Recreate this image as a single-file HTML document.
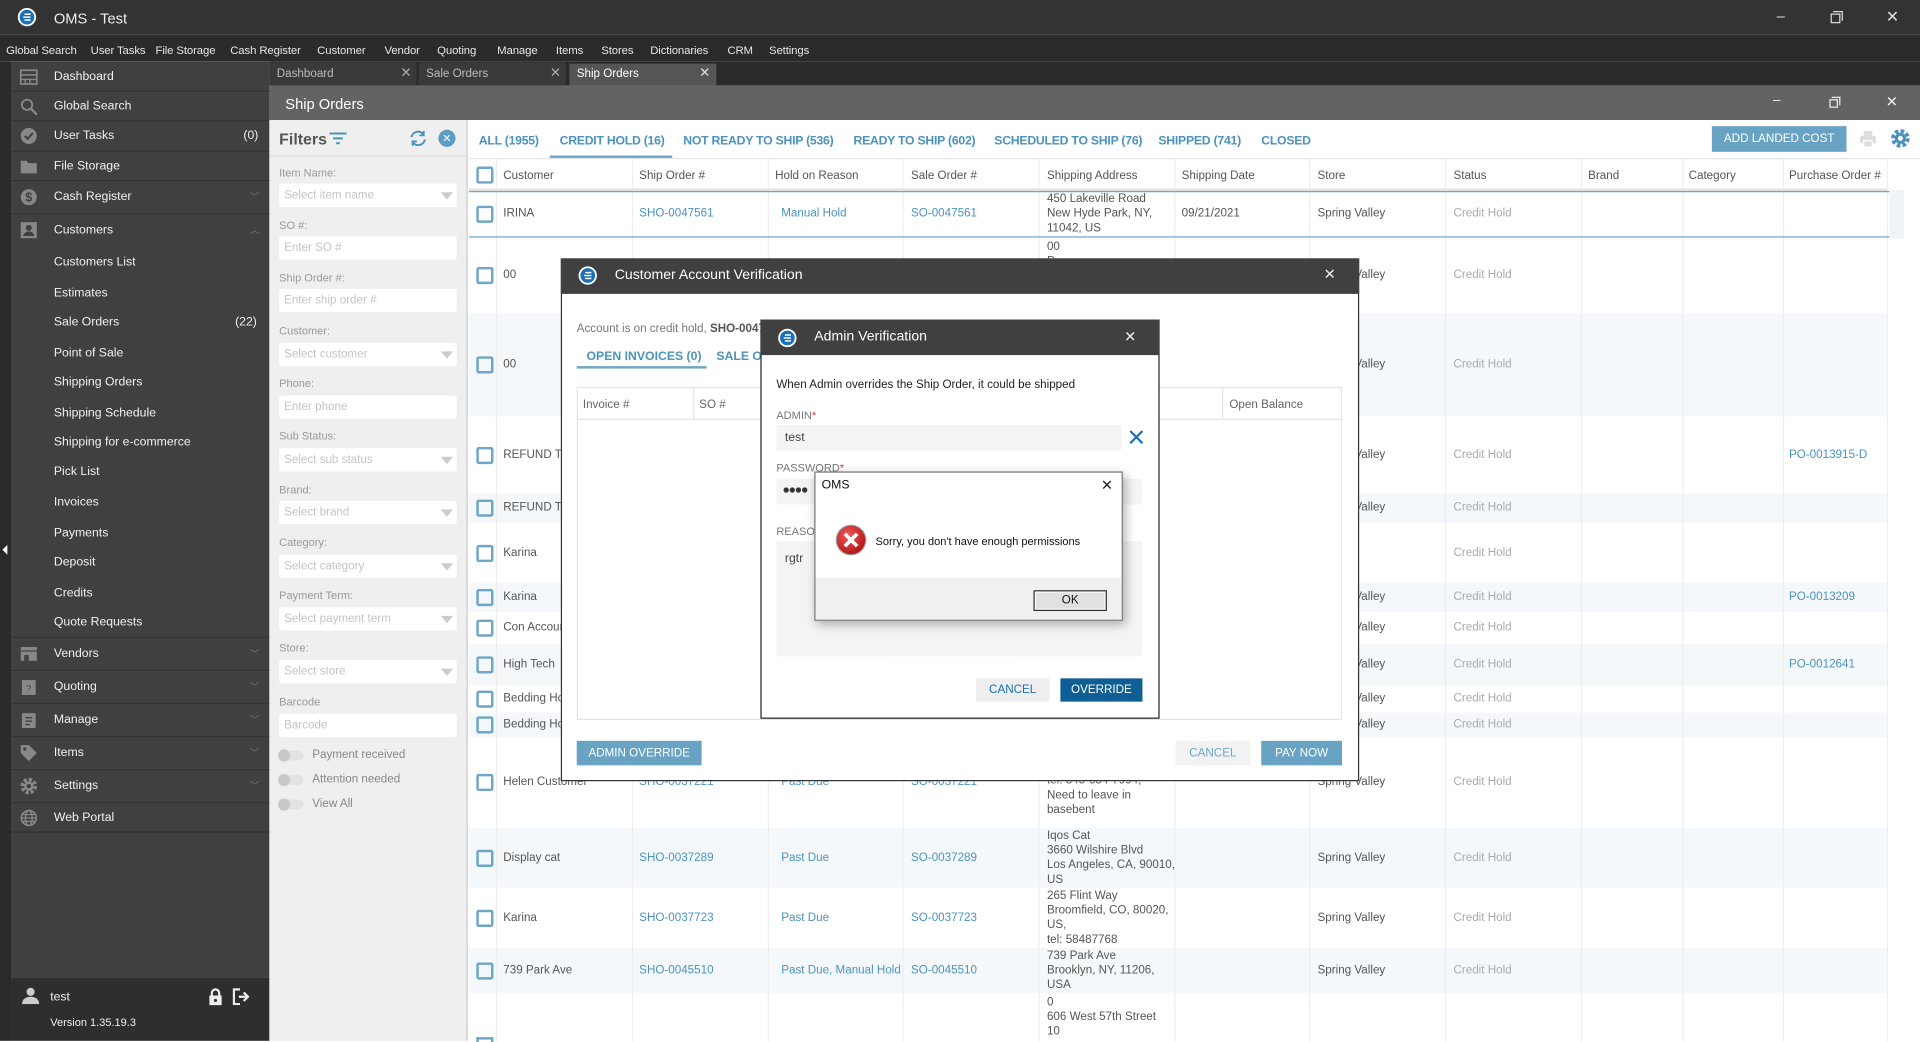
<!DOCTYPE html>
<html><head><meta charset="utf-8">
<style>
*{box-sizing:border-box;margin:0;padding:0}
html,body{width:1920px;height:1040px;overflow:hidden;background:#fff}
#s{position:absolute;left:0;top:0;width:1568px;height:850px;transform:scale(1.22449);transform-origin:0 0;font-family:"Liberation Sans",sans-serif;font-size:10px;color:#333}
.a{position:absolute}
.t{position:absolute;white-space:nowrap}
.menu span{position:absolute;top:36px;color:#e6e6e6;font-size:9.3px;letter-spacing:-.1px}
.sb{position:absolute;left:9px;width:211px;border-bottom:1px solid #333;color:#f0f0f0;font-size:10px}
.sb span{position:absolute;left:35px;top:50%;transform:translateY(-50%)}
.sb .ic{position:absolute;left:7px;top:50%;transform:translateY(-50%);width:15px;height:15px}
.sb .cnt{left:auto;right:9px}
.sb .chev{left:auto;right:8px;color:#777;font-size:8px}
.lbl{position:absolute;left:228px;color:#999;font-size:9px}
.inp{position:absolute;left:228px;width:145px;height:19px;background:#fff;border-radius:2px;color:#c4c4c4;font-size:9.5px;padding:4px 4px}
.inp.dd:after{content:"";position:absolute;right:3px;top:7px;border-left:5px solid transparent;border-right:5px solid transparent;border-top:6px solid #ccc}
.tg{position:absolute;left:228px;width:20px;height:8px;border-radius:4px;background:#e2e2e2}
.tg:before{content:"";position:absolute;left:-1px;top:-1px;width:10px;height:10px;border-radius:5px;background:#c8c8c8}
.ft{position:absolute;top:110px;color:#4b93bd;font-size:10px;font-weight:bold;letter-spacing:-.2px}
.hd{position:absolute;top:138px;color:#555;font-size:9.5px}
.row{position:absolute;left:383px;width:1158px}
.row .c{position:absolute;top:0;height:100%;display:flex;align-items:center;white-space:nowrap;font-size:9.5px;color:#555;line-height:12px}
.row .l{color:#4b93bd}
.row .g{color:#aaa}
.cb{position:absolute;left:6px;width:14px;height:14px;border:2px solid #6ca6c8;border-radius:2px;top:50%;margin-top:-7px}
.vl{position:absolute;top:130px;width:1px;height:720px;background:#eee}
.btn{position:absolute;display:flex;align-items:center;justify-content:center;font-size:9.5px}
</style></head><body><div id="s">

<div class="a" style="left:0;top:0;width:1568px;height:28px;background:#333"></div>
<svg class="a" style="left:14px;top:6px" width="16" height="16" viewBox="0 0 16 16"><circle cx="8" cy="8" r="7.5" fill="#fff"/><circle cx="8" cy="8" r="6" fill="#1b6fb5"/><rect x="6" y="5" width="5" height="1.2" fill="#fff"/><rect x="5" y="7.4" width="6" height="1.2" fill="#fff"/><rect x="6" y="9.8" width="5" height="1.2" fill="#fff"/></svg>
<div class="t" style="left:44px;top:8px;color:#eee;font-size:12px">OMS - Test</div>
<div class="t" style="left:1451px;top:6px;color:#ddd;font-size:12px">–</div>
<div class="a" style="left:1497px;top:9px;width:8px;height:8px;border:1px solid #ddd;border-left:none;border-bottom:none"></div>
<div class="a" style="left:1495px;top:11px;width:8px;height:8px;border:1px solid #ddd"></div>
<div class="t" style="left:1540px;top:6px;color:#ddd;font-size:13px">✕</div>

<div class="a" style="left:0;top:28px;width:1568px;height:22px;background:#2b2b2b;border-top:1px solid #3a3a3a"></div>
<div class="menu">
<span style="left:5px">Global Search</span><span style="left:74px">User Tasks</span><span style="left:127px">File Storage</span><span style="left:188px">Cash Register</span><span style="left:259px">Customer</span><span style="left:314px">Vendor</span><span style="left:357px">Quoting</span><span style="left:406px">Manage</span><span style="left:454px">Items</span><span style="left:491px">Stores</span><span style="left:531px">Dictionaries</span><span style="left:594px">CRM</span><span style="left:628px">Settings</span>
</div>

<div class="a" style="left:0;top:50px;width:9px;height:800px;background:#2a2a2a"></div>
<div class="a" style="left:2px;top:445px;border-top:4px solid transparent;border-bottom:4px solid transparent;border-right:4px solid #fff"></div>
<div class="a" style="left:9px;top:50px;width:211px;height:748px;background:#404040"></div>
<div class="sb" style="top:51px;height:24px"><svg class="ic" viewBox="0 0 16 16"><rect x="1" y="2" width="14" height="12" fill="none" stroke="#888" stroke-width="1.5"/><path d="M1 6h14M5 10v4M9 10v4M1 10h14" stroke="#888" stroke-width="1.3"/></svg><span>Dashboard</span></div>
<div class="sb" style="top:75px;height:24px"><svg class="ic" viewBox="0 0 16 16"><circle cx="6.5" cy="6.5" r="4.5" fill="none" stroke="#888" stroke-width="1.6"/><path d="M10 10l5 5" stroke="#888" stroke-width="2"/></svg><span>Global Search</span></div>
<div class="sb" style="top:99px;height:25px"><svg class="ic" viewBox="0 0 16 16"><circle cx="8" cy="8" r="7" fill="#888"/><path d="M4.5 8l2.5 2.5 4.5-5" stroke="#404040" stroke-width="1.8" fill="none"/></svg><span>User Tasks</span><span class="cnt">(0)</span></div>
<div class="sb" style="top:124px;height:24px"><svg class="ic" viewBox="0 0 16 16"><path d="M1 3h5l1.5 2H15v9H1z" fill="#888"/></svg><span>File Storage</span></div>
<div class="sb" style="top:148px;height:27px"><svg class="ic" viewBox="0 0 16 16"><circle cx="8" cy="8" r="7" fill="#888"/><text x="8" y="12" font-size="11" text-anchor="middle" fill="#404040" font-family="Liberation Sans" font-weight="bold">$</text></svg><span>Cash Register</span><span class="chev">﹀</span></div>
<div class="sb" style="top:175px;height:26px;border-bottom:none"><svg class="ic" viewBox="0 0 16 16"><rect x="1" y="1" width="14" height="14" fill="#888"/><circle cx="8" cy="6" r="2.6" fill="#404040"/><path d="M3 13c1-3 3-4 5-4s4 1 5 4z" fill="#404040"/></svg><span>Customers</span><span class="chev">︿</span></div>
<div class="t" style="left:44px;top:209px;color:#f0f0f0">Customers List</div>
<div class="t" style="left:44px;top:234px;color:#f0f0f0">Estimates</div>
<div class="t" style="left:44px;top:258px;color:#f0f0f0">Sale Orders</div><div class="t" style="left:192px;top:258px;color:#f0f0f0">(22)</div>
<div class="t" style="left:44px;top:283px;color:#f0f0f0">Point of Sale</div>
<div class="t" style="left:44px;top:307px;color:#f0f0f0">Shipping Orders</div>
<div class="t" style="left:44px;top:332px;color:#f0f0f0">Shipping Schedule</div>
<div class="t" style="left:44px;top:356px;color:#f0f0f0">Shipping for e-commerce</div>
<div class="t" style="left:44px;top:380px;color:#f0f0f0">Pick List</div>
<div class="t" style="left:44px;top:405px;color:#f0f0f0">Invoices</div>
<div class="t" style="left:44px;top:430px;color:#f0f0f0">Payments</div>
<div class="t" style="left:44px;top:454px;color:#f0f0f0">Deposit</div>
<div class="t" style="left:44px;top:479px;color:#f0f0f0">Credits</div>
<div class="t" style="left:44px;top:503px;color:#f0f0f0">Quote Requests</div>
<div class="a" style="left:9px;top:520px;width:211px;height:1px;background:#333"></div>
<div class="sb" style="top:521px;height:27px"><svg class="ic" viewBox="0 0 16 16"><rect x="1" y="2" width="14" height="3" fill="#888"/><rect x="1" y="6" width="14" height="8" fill="#888"/><rect x="4" y="9" width="4" height="5" fill="#404040"/></svg><span>Vendors</span><span class="chev">﹀</span></div>
<div class="sb" style="top:548px;height:27px"><svg class="ic" viewBox="0 0 16 16"><rect x="2" y="2" width="12" height="13" fill="#888"/><text x="8" y="12" font-size="8" text-anchor="middle" fill="#404040" font-family="Liberation Sans">?</text></svg><span>Quoting</span><span class="chev">﹀</span></div>
<div class="sb" style="top:575px;height:27px"><svg class="ic" viewBox="0 0 16 16"><rect x="2" y="2" width="12" height="13" rx="1" fill="#888"/><path d="M5 6h6M5 9h6M5 12h4" stroke="#404040" stroke-width="1.2"/></svg><span>Manage</span><span class="chev">﹀</span></div>
<div class="sb" style="top:602px;height:27px"><svg class="ic" viewBox="0 0 16 16"><path d="M1 1h7l7 7-7 7-7-7z" fill="#888"/><circle cx="4.5" cy="4.5" r="1.4" fill="#404040"/></svg><span>Items</span><span class="chev">﹀</span></div>
<div class="sb" style="top:629px;height:27px"><svg class="ic" viewBox="0 0 16 16"><circle cx="8" cy="8" r="5.5" fill="none" stroke="#888" stroke-width="3.5" stroke-dasharray="2.6 1.7"/><circle cx="8" cy="8" r="4" fill="#888"/><circle cx="8" cy="8" r="1.8" fill="#404040"/></svg><span>Settings</span><span class="chev">﹀</span></div>
<div class="sb" style="top:656px;height:24px"><svg class="ic" viewBox="0 0 16 16"><circle cx="8" cy="8" r="6.5" fill="none" stroke="#888" stroke-width="1.4"/><ellipse cx="8" cy="8" rx="3" ry="6.5" fill="none" stroke="#888" stroke-width="1.2"/><path d="M1.5 8h13M2.5 5h11M2.5 11h11" stroke="#888" stroke-width="1.1"/></svg><span>Web Portal</span></div>
<div class="a" style="left:9px;top:798px;width:211px;height:52px;background:#2e2e2e"></div>
<svg class="a" style="left:18px;top:806px" width="14" height="14" viewBox="0 0 14 14"><circle cx="7" cy="4" r="3.3" fill="#ccc"/><path d="M0 14c0-4 3-6 7-6s7 2 7 6z" fill="#ccc"/></svg>
<div class="t" style="left:41px;top:809px;color:#eee">test</div>
<svg class="a" style="left:170px;top:807px" width="12" height="14" viewBox="0 0 12 14"><rect x="1" y="6" width="10" height="8" fill="#eee"/><path d="M3 6V4a3 3 0 0 1 6 0v2" stroke="#eee" stroke-width="1.8" fill="none"/><circle cx="6" cy="10" r="1.3" fill="#2e2e2e"/></svg>
<svg class="a" style="left:190px;top:807px" width="15" height="14" viewBox="0 0 15 14"><path d="M6 1H1v12h5" stroke="#eee" stroke-width="1.8" fill="none"/><path d="M5 7h7M9 3.5L12.5 7 9 10.5" stroke="#eee" stroke-width="1.8" fill="none"/></svg>
<div class="t" style="left:41px;top:830px;color:#eee;font-size:9px">Version 1.35.19.3</div>

<div class="a" style="left:220px;top:50px;width:1348px;height:20px;background:#2b2b2b"></div>
<div class="a" style="left:220px;top:51px;width:120px;height:19px;background:#3a3a3a"></div>
<div class="t" style="left:226px;top:55px;color:#bbb;font-size:9.5px">Dashboard</div><div class="t" style="left:327px;top:53px;color:#aaa;font-size:11px">✕</div>
<div class="a" style="left:342px;top:51px;width:120px;height:19px;background:#3a3a3a"></div>
<div class="t" style="left:348px;top:55px;color:#bbb;font-size:9.5px">Sale Orders</div><div class="t" style="left:449px;top:53px;color:#aaa;font-size:11px">✕</div>
<div class="a" style="left:465px;top:52px;width:120px;height:18px;background:#555"></div>
<div class="t" style="left:471px;top:55px;color:#fff;font-size:9.5px">Ship Orders</div><div class="t" style="left:571px;top:53px;color:#ddd;font-size:11px">✕</div>

<div class="a" style="left:220px;top:70px;width:1348px;height:28px;background:#636363"></div>
<div class="t" style="left:233px;top:78px;color:#fff;font-size:12px">Ship Orders</div>
<div class="t" style="left:1448px;top:76px;color:#eee;font-size:11px">–</div>
<div class="a" style="left:1496px;top:79px;width:7px;height:7px;border:1px solid #eee;border-left:none;border-bottom:none"></div>
<div class="a" style="left:1494px;top:81px;width:7px;height:7px;border:1px solid #eee"></div>
<div class="t" style="left:1540px;top:76px;color:#eee;font-size:12px">✕</div>

<div class="a" style="left:220px;top:98px;width:162px;height:752px;background:#efefef;border-right:1px solid #ccc"></div>
<div class="t" style="left:228px;top:106px;color:#555;font-size:13px;font-weight:bold">Filters</div>
<svg class="a" style="left:269px;top:107px" width="14" height="12" viewBox="0 0 14 12"><path d="M0 2h14M3 6h8M5.5 10h3" stroke="#4b93bd" stroke-width="1.6"/></svg>
<svg class="a" style="left:334px;top:106px" width="15" height="14" viewBox="0 0 15 14"><path d="M2 6a5.5 5.5 0 0 1 10-2M13 8a5.5 5.5 0 0 1-10 2" stroke="#4b93bd" stroke-width="1.6" fill="none"/><path d="M12 1v3.5H8.5M3 13V9.5h3.5" stroke="#4b93bd" stroke-width="1.6" fill="none"/></svg>
<div class="a" style="left:358px;top:106px;width:14px;height:14px;border-radius:7px;background:#5a9ec6;color:#fff;font-size:9px;text-align:center;line-height:14px">✕</div>
<div class="a" style="left:220px;top:127px;width:162px;height:1px;background:#ddd"></div>
<div class="lbl" style="top:136px">Item Name:</div><div class="inp dd" style="top:150px">Select item name</div>
<div class="lbl" style="top:179px">SO #:</div><div class="inp" style="top:193px">Enter SO #</div>
<div class="lbl" style="top:222px">Ship Order #:</div><div class="inp" style="top:236px">Enter ship order #</div>
<div class="lbl" style="top:265px">Customer:</div><div class="inp dd" style="top:280px">Select customer</div>
<div class="lbl" style="top:308px">Phone:</div><div class="inp" style="top:323px">Enter phone</div>
<div class="lbl" style="top:351px">Sub Status:</div><div class="inp dd" style="top:366px">Select sub status</div>
<div class="lbl" style="top:395px">Brand:</div><div class="inp dd" style="top:409px">Select brand</div>
<div class="lbl" style="top:438px">Category:</div><div class="inp dd" style="top:453px">Select category</div>
<div class="lbl" style="top:481px">Payment Term:</div><div class="inp dd" style="top:496px">Select payment term</div>
<div class="lbl" style="top:524px">Store:</div><div class="inp dd" style="top:539px">Select store</div>
<div class="lbl" style="top:568px">Barcode</div><div class="inp" style="top:583px">Barcode</div>
<div class="tg" style="top:613px"></div><div class="t" style="left:255px;top:611px;color:#888;font-size:9.5px">Payment received</div>
<div class="tg" style="top:633px"></div><div class="t" style="left:255px;top:631px;color:#888;font-size:9.5px">Attention needed</div>
<div class="tg" style="top:653px"></div><div class="t" style="left:255px;top:651px;color:#888;font-size:9.5px">View All</div>

<div class="ft" style="left:391px">ALL (1955)</div>
<div class="ft" style="left:457px">CREDIT HOLD (16)</div>
<div class="a" style="left:449px;top:127px;width:100px;height:2px;background:#6ca6c8"></div>
<div class="ft" style="left:558px">NOT READY TO SHIP (536)</div>
<div class="ft" style="left:697px">READY TO SHIP (602)</div>
<div class="ft" style="left:812px">SCHEDULED TO SHIP (76)</div>
<div class="ft" style="left:946px">SHIPPED (741)</div>
<div class="ft" style="left:1030px">CLOSED</div>
<div class="btn" style="left:1398px;top:103px;width:110px;height:21px;background:#69a3c4;color:#fff">ADD LANDED COST</div>
<svg class="a" style="left:1518px;top:106px" width="15" height="15" viewBox="0 0 15 15"><rect x="4" y="1" width="7" height="4" fill="#ddd"/><rect x="1" y="5" width="13" height="6" rx="1" fill="#ddd"/><rect x="4" y="9" width="7" height="5" fill="#ddd" stroke="#fff"/></svg>
<svg class="a" style="left:1544px;top:105px" width="16" height="16" viewBox="0 0 16 16"><circle cx="8" cy="8" r="5.8" fill="none" stroke="#4b93bd" stroke-width="3.6" stroke-dasharray="2.8 1.75"/><circle cx="8" cy="8" r="4.5" fill="#4b93bd"/><circle cx="8" cy="8" r="2" fill="#fff"/></svg>
<div class="a" style="left:383px;top:129px;width:1185px;height:1px;background:#e4e4e4"></div>

<div class="a" style="left:383px;top:256px;width:1158px;height:84px;background:#f4f8fb"></div>
<div class="a" style="left:383px;top:403px;width:1158px;height:24px;background:#f4f8fb"></div>
<div class="a" style="left:383px;top:476px;width:1158px;height:24px;background:#f4f8fb"></div>
<div class="a" style="left:383px;top:526px;width:1158px;height:34px;background:#f4f8fb"></div>
<div class="a" style="left:383px;top:582px;width:1158px;height:20px;background:#f4f8fb"></div>
<div class="a" style="left:383px;top:676px;width:1158px;height:49px;background:#f4f8fb"></div>
<div class="a" style="left:383px;top:774px;width:1158px;height:37px;background:#f4f8fb"></div>
<div class="a" style="left:1541px;top:130px;width:27px;height:720px;background:#fff"></div>
<div class="a" style="left:1543px;top:155px;width:12px;height:40px;background:#f0f4f7"></div>

<div class="vl" style="left:405px"></div><div class="vl" style="left:516px"></div><div class="vl" style="left:627px"></div><div class="vl" style="left:737px"></div><div class="vl" style="left:848px"></div><div class="vl" style="left:959px"></div><div class="vl" style="left:1069px"></div><div class="vl" style="left:1180px"></div><div class="vl" style="left:1291px"></div><div class="vl" style="left:1374px"></div><div class="vl" style="left:1456px"></div><div class="vl" style="left:1541px"></div>

<div class="a" style="left:389px;top:136px;width:14px;height:14px;border:2px solid #6ca6c8;border-radius:2px"></div>
<div class="hd" style="left:411px">Customer</div><div class="hd" style="left:522px">Ship Order #</div><div class="hd" style="left:633px">Hold on Reason</div><div class="hd" style="left:744px">Sale Order #</div><div class="hd" style="left:855px">Shipping Address</div><div class="hd" style="left:965px">Shipping Date</div><div class="hd" style="left:1076px">Store</div><div class="hd" style="left:1187px">Status</div><div class="hd" style="left:1297px">Brand</div><div class="hd" style="left:1379px">Category</div><div class="hd" style="left:1461px">Purchase Order #</div>
<div class="a" style="left:383px;top:154px;width:1158px;height:2px;background:#e0e0e0"></div>
<div class="a" style="left:383px;top:156px;width:1160px;height:1px;background:#6ca6c8"></div>
<div class="a" style="left:383px;top:193px;width:1160px;height:1px;background:#6ca6c8"></div>

<div class="row" style="top:156px;height:38px"><div class="cb"></div><div class="c" style="left:28px">IRINA</div><div class="c l" style="left:139px">SHO-0047561</div><div class="c l" style="left:255px">Manual Hold</div><div class="c l" style="left:361px">SO-0047561</div><div class="c" style="left:472px">450 Lakeville Road<br>New Hyde Park, NY,<br>11042, US</div><div class="c" style="left:582px">09/21/2021</div><div class="c" style="left:693px">Spring Valley</div><div class="c g" style="left:804px">Credit Hold</div></div>
<div class="row" style="top:194px;height:62px"><div class="cb"></div><div class="c" style="left:28px">00</div><div class="c" style="left:472px;align-items:flex-start;padding-top:2px">00<br>D</div><div class="c" style="left:693px">Spring Valley</div><div class="c g" style="left:804px">Credit Hold</div></div>
<div class="row" style="top:256px;height:84px"><div class="cb"></div><div class="c" style="left:28px">00</div><div class="c" style="left:693px">Spring Valley</div><div class="c g" style="left:804px">Credit Hold</div></div>
<div class="row" style="top:340px;height:63px"><div class="cb"></div><div class="c" style="left:28px">REFUND TEST</div><div class="c" style="left:693px">Spring Valley</div><div class="c g" style="left:804px">Credit Hold</div><div class="c l" style="left:1078px">PO-0013915-D</div></div>
<div class="row" style="top:403px;height:24px"><div class="cb"></div><div class="c" style="left:28px">REFUND TEST</div><div class="c" style="left:693px">Spring Valley</div><div class="c g" style="left:804px">Credit Hold</div></div>
<div class="row" style="top:427px;height:49px"><div class="cb"></div><div class="c" style="left:28px">Karina</div><div class="c g" style="left:804px">Credit Hold</div></div>
<div class="row" style="top:476px;height:24px"><div class="cb"></div><div class="c" style="left:28px">Karina</div><div class="c" style="left:693px">Spring Valley</div><div class="c g" style="left:804px">Credit Hold</div><div class="c l" style="left:1078px">PO-0013209</div></div>
<div class="row" style="top:500px;height:26px"><div class="cb"></div><div class="c" style="left:28px">Con Account</div><div class="c" style="left:693px">Spring Valley</div><div class="c g" style="left:804px">Credit Hold</div></div>
<div class="row" style="top:526px;height:34px"><div class="cb"></div><div class="c" style="left:28px">High Tech</div><div class="c" style="left:693px">Spring Valley</div><div class="c g" style="left:804px">Credit Hold</div><div class="c l" style="left:1078px">PO-0012641</div></div>
<div class="row" style="top:560px;height:22px"><div class="cb"></div><div class="c" style="left:28px">Bedding House</div><div class="c" style="left:693px">Spring Valley</div><div class="c g" style="left:804px">Credit Hold</div></div>
<div class="row" style="top:582px;height:20px"><div class="cb"></div><div class="c" style="left:28px">Bedding House</div><div class="c" style="left:693px">Spring Valley</div><div class="c g" style="left:804px">Credit Hold</div></div>
<div class="row" style="top:602px;height:74px"><div class="cb"></div><div class="c" style="left:28px">Helen Customer</div><div class="c l" style="left:139px">SHO-0037221</div><div class="c l" style="left:255px">Past Due</div><div class="c l" style="left:361px">SO-0037221</div><div class="c" style="left:472px;padding-top:10px">Spring Valley, NY,<br>tel: 845-654-7994,<br>Need to leave in<br>basebent</div><div class="c" style="left:693px">Spring Valley</div><div class="c g" style="left:804px">Credit Hold</div></div>
<div class="row" style="top:676px;height:49px"><div class="cb"></div><div class="c" style="left:28px">Display cat</div><div class="c l" style="left:139px">SHO-0037289</div><div class="c l" style="left:255px">Past Due</div><div class="c l" style="left:361px">SO-0037289</div><div class="c" style="left:472px">Iqos Cat<br>3660 Wilshire Blvd<br>Los Angeles, CA, 90010,<br>US</div><div class="c" style="left:693px">Spring Valley</div><div class="c g" style="left:804px">Credit Hold</div></div>
<div class="row" style="top:725px;height:49px"><div class="cb"></div><div class="c" style="left:28px">Karina</div><div class="c l" style="left:139px">SHO-0037723</div><div class="c l" style="left:255px">Past Due</div><div class="c l" style="left:361px">SO-0037723</div><div class="c" style="left:472px">265 Flint Way<br>Broomfield, CO, 80020,<br>US,<br>tel: 58487768</div><div class="c" style="left:693px">Spring Valley</div><div class="c g" style="left:804px">Credit Hold</div></div>
<div class="row" style="top:774px;height:37px"><div class="cb"></div><div class="c" style="left:28px">739 Park Ave</div><div class="c l" style="left:139px">SHO-0045510</div><div class="c l" style="left:255px">Past Due, Manual Hold</div><div class="c l" style="left:361px">SO-0045510</div><div class="c" style="left:472px">739 Park Ave<br>Brooklyn, NY, 11206,<br>USA</div><div class="c" style="left:693px">Spring Valley</div><div class="c g" style="left:804px">Credit Hold</div></div>
<div class="row" style="top:811px;height:39px"><div class="c" style="left:472px">0<br>606 West 57th Street<br>10</div><div class="a" style="left:6px;top:36px;width:14px;height:4px;border:2px solid #6ca6c8;border-bottom:none"></div></div>

<div class="a" style="left:458px;top:211px;width:652px;height:427px;background:#fff;border:1px solid #333"></div>
<div class="a" style="left:458px;top:211px;width:652px;height:29px;background:#404040"></div>
<svg class="a" style="left:472px;top:217px" width="16" height="16" viewBox="0 0 16 16"><circle cx="8" cy="8" r="7.5" fill="#fff"/><circle cx="8" cy="8" r="6" fill="#1b6fb5"/><rect x="6" y="5" width="5" height="1.2" fill="#fff"/><rect x="5" y="7.4" width="6" height="1.2" fill="#fff"/><rect x="6" y="9.8" width="5" height="1.2" fill="#fff"/></svg>
<div class="t" style="left:502px;top:219px;color:#fff;font-size:11.5px">Customer Account Verification</div>
<div class="t" style="left:1081px;top:217px;color:#eee;font-size:12px">✕</div>
<div class="t" style="left:471px;top:263px;color:#777;font-size:9.5px">Account is on credit hold, <b style="color:#555">SHO-0047561</b></div>
<div class="t" style="left:479px;top:286px;color:#4b93bd;font-size:10px;font-weight:bold">OPEN INVOICES (0)</div>
<div class="t" style="left:585px;top:286px;color:#4b93bd;font-size:10px;font-weight:bold">SALE ORDERS</div>
<div class="a" style="left:471px;top:299px;width:106px;height:2px;background:#6ca6c8"></div>
<div class="a" style="left:471px;top:316px;width:625px;height:272px;border:1px solid #e4e4e4"></div>
<div class="a" style="left:471px;top:342px;width:625px;height:1px;background:#e4e4e4"></div>
<div class="a" style="left:566px;top:316px;width:1px;height:26px;background:#e4e4e4"></div>
<div class="a" style="left:998px;top:316px;width:1px;height:26px;background:#e4e4e4"></div>
<div class="t" style="left:476px;top:325px;color:#666;font-size:9.5px">Invoice #</div>
<div class="t" style="left:571px;top:325px;color:#666;font-size:9.5px">SO #</div>
<div class="t" style="left:1004px;top:325px;color:#666;font-size:9.5px">Open Balance</div>
<div class="btn" style="left:471px;top:605px;width:102px;height:20px;background:#69a3c4;color:#fff">ADMIN OVERRIDE</div>
<div class="btn" style="left:960px;top:605px;width:61px;height:20px;background:#f2f2f2;color:#6ca6c8">CANCEL</div>
<div class="btn" style="left:1030px;top:605px;width:66px;height:20px;background:#69a3c4;color:#fff">PAY NOW</div>

<div class="a" style="left:621px;top:261px;width:326px;height:326px;background:#fff;border:1px solid #222"></div>
<div class="a" style="left:621px;top:261px;width:326px;height:29px;background:#404040"></div>
<svg class="a" style="left:635px;top:268px" width="16" height="16" viewBox="0 0 16 16"><circle cx="8" cy="8" r="7.5" fill="#fff"/><circle cx="8" cy="8" r="6" fill="#1b6fb5"/><rect x="6" y="5" width="5" height="1.2" fill="#fff"/><rect x="5" y="7.4" width="6" height="1.2" fill="#fff"/><rect x="6" y="9.8" width="5" height="1.2" fill="#fff"/></svg>
<div class="t" style="left:665px;top:269px;color:#fff;font-size:11.5px">Admin Verification</div>
<div class="t" style="left:918px;top:268px;color:#eee;font-size:12px">✕</div>
<div class="t" style="left:634px;top:309px;color:#222;font-size:9.5px">When Admin overrides the Ship Order, it could be shipped</div>
<div class="t" style="left:634px;top:334px;color:#777;font-size:9px">ADMIN<span style="color:#e33">*</span></div>
<div class="a" style="left:634px;top:347px;width:282px;height:21px;background:#f4f4f4;border-radius:2px"></div>
<div class="t" style="left:641px;top:352px;color:#444;font-size:10px">test</div>
<svg class="a" style="left:922px;top:351px" width="12" height="12" viewBox="0 0 12 12"><path d="M1 1l10 10M11 1L1 11" stroke="#1b6fb5" stroke-width="1.8"/></svg>
<div class="t" style="left:634px;top:377px;color:#777;font-size:9px">PASSWORD<span style="color:#e33">*</span></div>
<div class="a" style="left:634px;top:391px;width:299px;height:21px;background:#f4f4f4;border-radius:2px"></div>
<div class="t" style="left:639px;top:395px;color:#333;font-size:10px;letter-spacing:-1px">●●●●</div>
<div class="t" style="left:634px;top:429px;color:#777;font-size:9px">REASON</div>
<div class="a" style="left:634px;top:442px;width:299px;height:94px;background:#f4f4f4;border-radius:2px"></div>
<div class="t" style="left:641px;top:451px;color:#444;font-size:10px">rgtr</div>
<div class="btn" style="left:797px;top:554px;width:60px;height:19px;background:#eee;color:#1b6fb5">CANCEL</div>
<div class="btn" style="left:866px;top:554px;width:67px;height:19px;background:#0f5e96;color:#fff">OVERRIDE</div>

<div class="a" style="left:665px;top:385px;width:252px;height:122px;background:#fff;border:1px solid #777;box-shadow:2px 3px 8px rgba(0,0,0,.3)"></div>
<div class="a" style="left:666px;top:472px;width:250px;height:34px;background:#f0f0f0"></div>
<div class="t" style="left:671px;top:391px;color:#111;font-size:10px">OMS</div>
<div class="t" style="left:899px;top:389px;color:#222;font-size:12px">✕</div>
<svg class="a" style="left:682px;top:428px" width="26" height="26" viewBox="0 0 26 26"><defs><radialGradient id="rg" cx=".4" cy=".35" r=".7"><stop offset="0" stop-color="#f25a5a"/><stop offset="1" stop-color="#b01010"/></radialGradient></defs><circle cx="13" cy="13" r="12" fill="url(#rg)" stroke="#999" stroke-width="1"/><path d="M8 8l10 10M18 8L8 18" stroke="#fff" stroke-width="3"/></svg>
<div class="t" style="left:715px;top:437px;color:#111;font-size:9px">Sorry, you don't have enough permissions</div>
<div class="btn" style="left:844px;top:482px;width:60px;height:17px;background:#e1e1e1;border:1px solid #333;box-shadow:inset 0 0 0 1px #fff;color:#111">OK</div>

</div></body></html>
